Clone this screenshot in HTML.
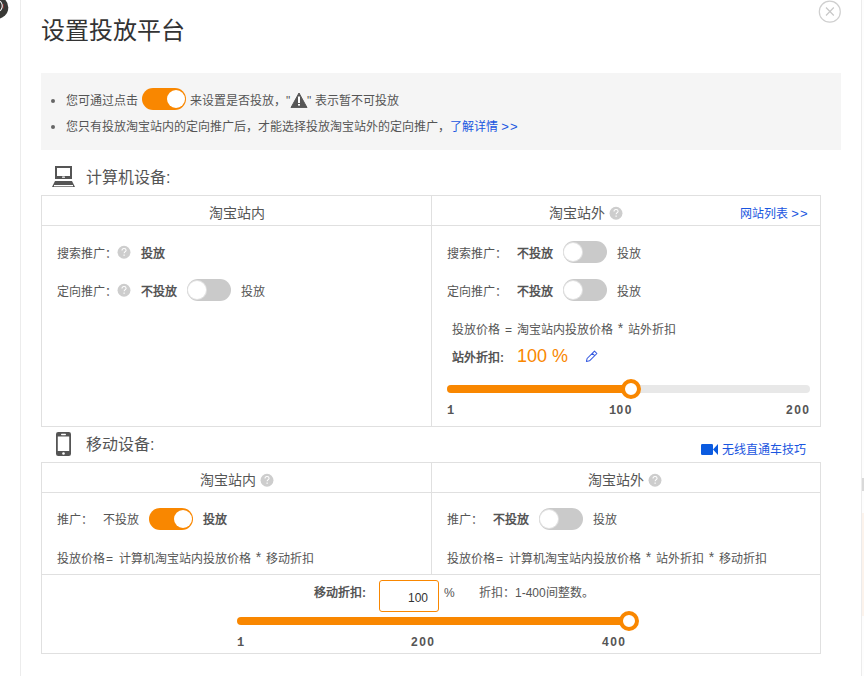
<!DOCTYPE html>
<html lang="zh-CN">
<head>
<meta charset="utf-8">
<style>
*{box-sizing:border-box;margin:0;padding:0}
html,body{width:864px;height:676px;overflow:hidden;background:#fff}
body{position:relative;font-family:"Liberation Sans",sans-serif;color:#555;font-size:12px}
.a{position:absolute;white-space:nowrap}
.t12{font-size:12px;line-height:18px}
.num{font-weight:bold;font-size:12px;line-height:18px;color:#555;letter-spacing:1.5px}
.num u{text-decoration:none;font-family:"Liberation Mono",monospace;letter-spacing:.3px}
.g{display:inline-block;text-align:center}
.bg{background:#f5f5f5}
.b{font-weight:bold;color:#555}
.bl{color:#1955e0}
.gt{font-size:13px;line-height:10px;letter-spacing:1px;margin-left:0}
.tog{position:absolute;width:44px;height:22px;border-radius:11px;background:#ccc}
.tog i{position:absolute;top:2px;width:18px;height:18px;border-radius:50%;background:#fff}
.tog.on{background:#f98700}
.tog.on i{left:25px}
.tog.off{background:#cacaca}
.tog.off i{left:1px;box-shadow:0 0 0 1px #e2e2e2}
.q{position:absolute;width:13px;height:13px;border-radius:50%;background:#ccc;color:#fff;font-size:10px;line-height:13px;text-align:center;font-weight:bold}
.hl{position:absolute;height:1px;background:#e0e0e0}
.vl{position:absolute;width:1px;background:#e0e0e0}
</style>
</head>
<body>
<!-- background bits -->
<svg class="a" style="left:0;top:0" width="12" height="22" viewBox="0 0 12 22"><circle cx="-3" cy="7.5" r="11.3" fill="#383835"/><ellipse cx="-2" cy="6" rx="4.3" ry="5.3" fill="none" stroke="#fff" stroke-width="1.1"/><path d="M3.4 4V8.5" stroke="#a33" stroke-width=".7"/></svg>
<div class="vl" style="left:20px;top:0;height:676px;background:#ececec"></div>
<div class="vl" style="left:861px;top:0;height:676px;background:#ececec"></div>
<div class="a" style="left:862px;top:0;width:2px;height:676px;background:#fdfdfd"></div>
<div class="a" style="left:862px;top:478px;width:2px;height:13px;background:#d9d9d9"></div>
<div class="a" style="left:862px;top:513px;width:2px;height:103px;background:#fcf3ec"></div>

<!-- close -->
<svg class="a" style="left:818px;top:0" width="24" height="24" viewBox="0 0 24 24">
<circle cx="11.8" cy="11.7" r="10.5" fill="none" stroke="#cfcfcf" stroke-width="1.2"/>
<path d="M8 7.5L15.8 15.5M15.8 7.5L8 15.5" stroke="#c8c8c8" stroke-width="1.2"/>
</svg>

<div class="a" style="left:41px;top:14px;font-size:24px;line-height:34px;color:#333;font-weight:300">设置投放平台</div>

<!-- tips -->
<div class="a" style="left:41px;top:73px;width:800px;height:77px;background:#f5f5f5"></div>
<div class="a" style="left:51px;top:99px;width:4px;height:4px;border-radius:50%;background:#666"></div>
<div class="a" style="left:51px;top:125px;width:4px;height:4px;border-radius:50%;background:#666"></div>
<div class="a t12" style="left:66px;top:92px">您可通过点击</div>
<div class="tog on" style="left:142px;top:88px"><i></i></div>
<div class="a t12" style="left:190px;top:92px">来设置是否投放，"</div>
<svg class="a" style="left:290px;top:92px" width="18" height="16" viewBox="0 0 18 16"><path d="M9 1L17 15.6H1Z" fill="#555" stroke="#555" stroke-width="1" stroke-linejoin="round"/><rect x="8" y="4.5" width="2" height="6.5" fill="#fff"/><rect x="8" y="12" width="2" height="1.6" fill="#fff"/></svg>
<div class="a t12" style="left:307px;top:92px">" 表示暂不可投放</div>
<div class="a t12" style="left:66px;top:118px">您只有投放淘宝站内的定向推广后，才能选择投放淘宝站外的定向推广，<span class="bl">了解详情 <span class="gt">&gt;&gt;</span></span></div>

<!-- section 1 -->
<svg class="a" style="left:52px;top:165px" width="24" height="23" viewBox="0 0 24 23">
<rect x="3" y="1" width="17" height="13" fill="#555"/>
<rect x="5" y="3" width="13" height="8" fill="#fff"/>
<rect x="10" y="11.5" width="3" height="1.3" rx=".6" fill="#fff"/>
<path d="M3 16H20L23 22H0Z" fill="#555"/>
<rect x="2" y="20" width="19" height="1.3" fill="#fff"/>
</svg>
<div class="a" style="left:86px;top:167px;font-size:16px;line-height:22px;color:#555;font-weight:300">计算机设备:</div>

<!-- table 1 -->
<div class="a" style="left:41px;top:195px;width:780px;height:232px;border:1px solid #e0e0e0"></div>
<div class="hl" style="left:41px;top:225px;width:780px"></div>
<div class="vl" style="left:431px;top:195px;height:232px"></div>

<div class="a" style="left:209px;top:203px;font-size:14px;line-height:20px">淘宝站内</div>
<div class="a" style="left:549px;top:203px;font-size:14px;line-height:20px">淘宝站外</div>
<svg class="a" style="left:609px;top:206px" width="14" height="14" viewBox="0 0 14 14"><circle cx="7" cy="7.2" r="6.45" fill="#cdcdcd"/><path d="M5 5.5C5 4.2 5.9 3.5 7.05 3.5S9.1 4.2 9.1 5.3C9.1 6.6 7.1 6.8 7.1 8.3" fill="none" stroke="#fff" stroke-width="1.05"/><rect x="6.5" y="9.5" width="1.2" height="1.3" fill="#fff"/></svg>
<div class="a bl t12" style="left:740px;top:205px">网站列表 <span class="gt">&gt;&gt;</span></div>

<div class="a t12" style="left:57px;top:245px">搜索推广：</div>
<svg class="a" style="left:117px;top:245px" width="14" height="14" viewBox="0 0 14 14"><circle cx="7" cy="7.2" r="6.45" fill="#cdcdcd"/><path d="M5 5.5C5 4.2 5.9 3.5 7.05 3.5S9.1 4.2 9.1 5.3C9.1 6.6 7.1 6.8 7.1 8.3" fill="none" stroke="#fff" stroke-width="1.05"/><rect x="6.5" y="9.5" width="1.2" height="1.3" fill="#fff"/></svg>
<div class="a t12 b" style="left:141px;top:245px">投放</div>
<div class="a t12" style="left:57px;top:283px">定向推广：</div>
<svg class="a" style="left:117px;top:283px" width="14" height="14" viewBox="0 0 14 14"><circle cx="7" cy="7.2" r="6.45" fill="#cdcdcd"/><path d="M5 5.5C5 4.2 5.9 3.5 7.05 3.5S9.1 4.2 9.1 5.3C9.1 6.6 7.1 6.8 7.1 8.3" fill="none" stroke="#fff" stroke-width="1.05"/><rect x="6.5" y="9.5" width="1.2" height="1.3" fill="#fff"/></svg>
<div class="a t12 b" style="left:141px;top:283px">不投放</div>
<div class="tog off" style="left:187px;top:279px"><i></i></div>
<div class="a t12" style="left:241px;top:283px">投放</div>

<div class="a t12" style="left:447px;top:245px">搜索推广：</div>
<div class="a t12 b" style="left:517px;top:245px">不投放</div>
<div class="tog off" style="left:563px;top:241px"><i></i></div>
<div class="a t12" style="left:617px;top:245px">投放</div>
<div class="a t12" style="left:447px;top:283px">定向推广：</div>
<div class="a t12 b" style="left:517px;top:283px">不投放</div>
<div class="tog off" style="left:563px;top:279px"><i></i></div>
<div class="a t12" style="left:617px;top:283px">投放</div>

<div class="a t12" style="left:452px;top:321px">投放价格<span class="g" style="width:17px">=</span>淘宝站内投放价格<span class="g" style="width:15px;font-size:14px;line-height:10px;position:relative;top:-1px">*</span>站外折扣</div>
<div class="a t12 b" style="left:452px;top:349px">站外折扣:</div>
<div class="a" style="left:517px;top:344px;font-size:18px;line-height:24px;color:#f98700">100 %</div>
<svg class="a" style="left:584px;top:349px" width="14" height="14" viewBox="0 0 14 14"><path d="M2.4 12.5L3.1 9.5L10.5 2.1L12.9 4.5L5.5 11.8Z M8.3 4.3L10.7 6.7" fill="none" stroke="#3358e0" stroke-width="1.05" stroke-linejoin="round"/></svg>

<div class="a" style="left:447px;top:385px;width:363px;height:8px;border-radius:4px;background:#e8e8e8"></div>
<div class="a" style="left:447px;top:385px;width:184px;height:8px;border-radius:4px;background:#f98700"></div>
<div class="a" style="left:621px;top:379px;width:20px;height:20px;border-radius:50%;border:4px solid #f98700;background:#fff"></div>
<div class="a num" style="left:447px;top:401px"><u>1</u></div>
<div class="a num" style="left:609px;top:401px"><u>1</u>00</div>
<div class="a num" style="left:786px;top:401px">200</div>

<!-- section 2 -->
<svg class="a" style="left:54px;top:430px" width="18" height="28" viewBox="0 0 18 28">
<rect x="2" y="2" width="15" height="24" rx="2.2" fill="#555"/>
<rect x="3.8" y="6.5" width="11.4" height="14.5" fill="#fff"/>
<rect x="7" y="3.8" width="5" height="1.4" rx=".7" fill="#fff"/>
<circle cx="9.5" cy="23.5" r="1.3" fill="#fff"/>
</svg>
<div class="a" style="left:86px;top:434px;font-size:16px;line-height:22px;color:#555;font-weight:300">移动设备:</div>
<svg class="a" style="left:700px;top:443px" width="20" height="13" viewBox="0 0 20 13"><rect x="1" y="1" width="12" height="11" rx="1.3" fill="#0b5be0"/><path d="M13 6.5L18 1V12Z" fill="#0b5be0"/></svg>
<div class="a bl t12" style="left:722px;top:441px">无线直通车技巧</div>

<!-- table 2 -->
<div class="a" style="left:41px;top:462px;width:780px;height:192px;border:1px solid #e0e0e0"></div>
<div class="hl" style="left:41px;top:492px;width:780px"></div>
<div class="hl" style="left:41px;top:574px;width:780px"></div>
<div class="vl" style="left:431px;top:462px;height:112px"></div>

<div class="a" style="left:200px;top:470px;font-size:14px;line-height:20px">淘宝站内</div>
<svg class="a" style="left:260px;top:473px" width="14" height="14" viewBox="0 0 14 14"><circle cx="7" cy="7.2" r="6.45" fill="#cdcdcd"/><path d="M5 5.5C5 4.2 5.9 3.5 7.05 3.5S9.1 4.2 9.1 5.3C9.1 6.6 7.1 6.8 7.1 8.3" fill="none" stroke="#fff" stroke-width="1.05"/><rect x="6.5" y="9.5" width="1.2" height="1.3" fill="#fff"/></svg>
<div class="a" style="left:588px;top:470px;font-size:14px;line-height:20px">淘宝站外</div>
<svg class="a" style="left:648px;top:473px" width="14" height="14" viewBox="0 0 14 14"><circle cx="7" cy="7.2" r="6.45" fill="#cdcdcd"/><path d="M5 5.5C5 4.2 5.9 3.5 7.05 3.5S9.1 4.2 9.1 5.3C9.1 6.6 7.1 6.8 7.1 8.3" fill="none" stroke="#fff" stroke-width="1.05"/><rect x="6.5" y="9.5" width="1.2" height="1.3" fill="#fff"/></svg>

<div class="a t12" style="left:57px;top:511px">推广：</div>
<div class="a t12" style="left:103px;top:511px">不投放</div>
<div class="tog on" style="left:149px;top:508px"><i></i></div>
<div class="a t12 b" style="left:203px;top:511px">投放</div>
<div class="a t12" style="left:57px;top:550px">投放价格<span class="g" style="width:14px;text-align:left;padding-left:1px">=</span>计算机淘宝站内投放价格<span class="g" style="width:15px;font-size:14px;line-height:10px;position:relative;top:-1px">*</span>移动折扣</div>

<div class="a t12" style="left:447px;top:511px">推广：</div>
<div class="a t12 b" style="left:493px;top:511px">不投放</div>
<div class="tog off" style="left:539px;top:508px"><i></i></div>
<div class="a t12" style="left:593px;top:511px">投放</div>
<div class="a t12" style="left:447px;top:550px">投放价格<span class="g" style="width:14px;text-align:left;padding-left:1px">=</span>计算机淘宝站内投放价格<span class="g" style="width:15px;font-size:14px;line-height:10px;position:relative;top:-1px">*</span>站外折扣<span class="g" style="width:15px;font-size:14px;line-height:10px;position:relative;top:-1px">*</span>移动折扣</div>

<div class="a t12 b" style="left:314px;top:584px">移动折扣:</div>
<div class="a" style="left:379px;top:580px;width:60px;height:32px;border:1px solid #f98700;border-radius:3px;background:#fff"></div>
<div class="a t12" style="left:402px;top:589px;color:#333;width:26px;text-align:right">100</div>
<div class="a t12" style="left:444px;top:584px">%</div>
<div class="a t12" style="left:479px;top:584px">折扣：1-400间整数。</div>

<div class="a" style="left:237px;top:617px;width:392px;height:8px;border-radius:4px;background:#f98700"></div>
<div class="a" style="left:619px;top:611px;width:20px;height:20px;border-radius:50%;border:4px solid #f98700;background:#fff"></div>
<div class="a num" style="left:237px;top:633px"><u>1</u></div>
<div class="a num" style="left:411px;top:633px">200</div>
<div class="a num" style="left:602px;top:633px">400</div>
</body>
</html>
